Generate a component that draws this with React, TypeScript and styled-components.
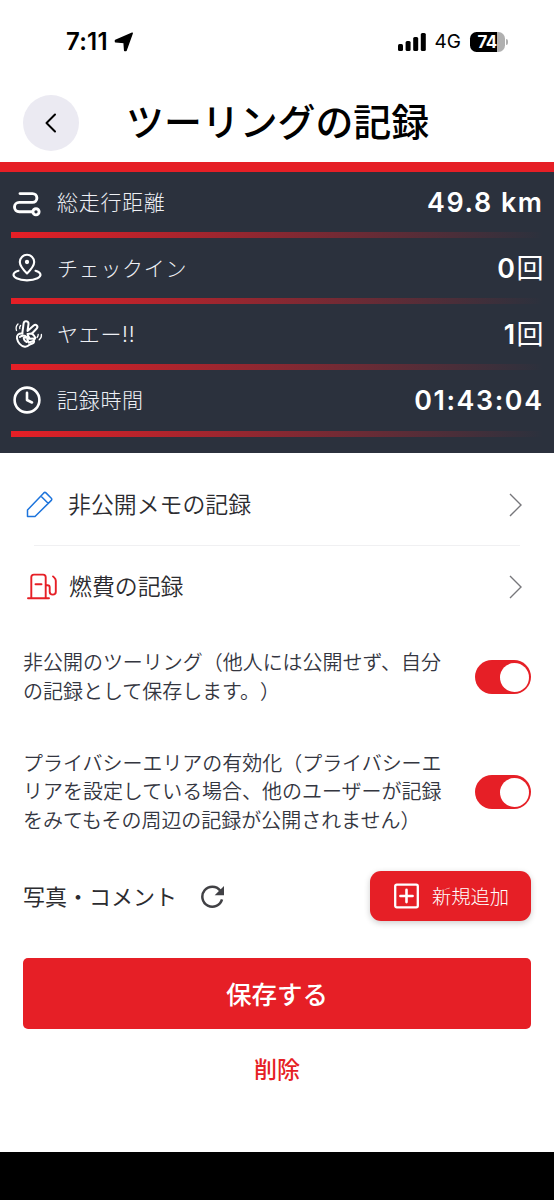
import React from 'react';
import styled, { createGlobalStyle } from 'styled-components';

const GlobalStyle = createGlobalStyle`
  * { box-sizing: border-box; }
  body { margin: 0; background: #fff; }
  button { border: 0; padding: 0; margin: 0; background: none; font: inherit; color: inherit; cursor: pointer; }
  svg { display: block; flex: none; }
`;

const RED = '#e61f26';

const Screen = styled.div`
  width: 554px;
  height: 1200px;
  display: flex;
  flex-direction: column;
  background: #fff;
  font-family: Inter, 'Noto Sans CJK JP', sans-serif;
  color: #2c2c30;
  white-space: nowrap;
  overflow: hidden;
`;

const StatusBar = styled.div`
  height: 83px;
  display: flex;
  align-items: center;
  justify-content: space-between;
  padding: 0 46px 0 66px;
  color: #000;
`;

const StatusGroup = styled.div`
  display: flex;
  align-items: center;
`;

const Clock = styled.span`
  font-size: 24px;
  font-weight: 600;
  letter-spacing: 0.2px;
  margin-right: 6px;
`;

const Network = styled.span`
  font-size: 19px;
  font-weight: 400;
  margin: 0 9px 0 9px;
  letter-spacing: 0;
`;

const Battery = styled.div`
  width: 35px;
  height: 20px;
  border-radius: 6.5px;
  background: linear-gradient(90deg, #000 76%, #b0b0b0 76%);
  color: #fff;
  font-size: 17px;
  font-weight: 700;
  line-height: 20px;
  letter-spacing: -0.8px;
  text-align: center;
  padding-right: 1px;
`;

const BatteryTip = styled.div`
  width: 2px;
  height: 6px;
  margin-left: 1px;
  border-radius: 0 2px 2px 0;
  background: #b0b0b0;
`;

const Header = styled.header`
  height: 79px;
  display: flex;
  align-items: center;
  padding: 0 23px;
  gap: 47px;
`;

const BackButton = styled.button`
  width: 56px;
  height: 56px;
  border-radius: 50%;
  background: #ebeaf2;
  display: flex;
  align-items: center;
  justify-content: center;
`;

const Title = styled.h1`
  margin: 0;
  font-size: 37.9px;
  line-height: 54px;
  padding-bottom: 1px;
  font-weight: 500;
  color: #000;
`;

const Stats = styled.section`
  height: 291px;
  border-top: 10px solid ${RED};
  background: #2b313d;
  padding: 0 11px;
`;

const StatRow = styled.div`
  height: 66.15px;
  display: flex;
  flex-direction: column;
`;

const StatBody = styled.div`
  flex: 1;
  display: flex;
  align-items: center;
`;

const StatLabel = styled.span`
  flex: 1;
  margin-left: 14px;
  padding-top: 2px;
  font-size: 21px;
  line-height: 30px;
  letter-spacing: 0.7px;
  font-weight: 300;
  color: #eef0f5;
`;

const StatValue = styled.span`
  font-size: 26.8px;
  line-height: 30px;
  font-weight: 600;
  color: #fff;
  letter-spacing: 1.6px;
  margin-right: -0.6px;
`;

const Counter = styled.span`
  font-size: 27px;
  font-weight: 400;
  letter-spacing: 0;
`;

const Underline = styled.div`
  height: 6px;
  background: linear-gradient(90deg, ${RED} 0%, rgba(230, 31, 38, 0) 100%);
`;

const LinkRow = styled.button`
  height: ${(p: { $height: number }) => p.$height}px;
  display: flex;
  align-items: center;
  padding: 0 32px 0 23px;
  text-align: left;
`;

const LinkList = styled.nav`
  padding-top: 11px;
  display: flex;
  flex-direction: column;
`;

const LinkLabel = styled.span`
  flex: 1;
  margin-left: 11px;
  font-size: 22.9px;
  line-height: 32px;
  font-weight: 350;
`;

const Separator = styled.div`
  height: 1px;
  margin: 0 34px;
  background: #f0f0f2;
`;

const ToggleRow = styled.div`
  display: flex;
  align-items: center;
  justify-content: space-between;
  height: ${(p: { $height: number }) => p.$height}px;
  padding: 0 23px;
`;

const ToggleText = styled.p`
  margin: 0;
  padding-top: 1px;
  font-size: 19.98px;
  line-height: 28.3px;
  font-weight: 350;
  color: #34363f;
  text-spacing-trim: space-all;
`;

const Switch = styled.button`
  width: 56px;
  height: 34px;
  border-radius: 17px;
  background: ${RED};
  display: flex;
  justify-content: flex-end;
  align-items: center;
  padding: 0 2px;
  flex: none;
`;

const Knob = styled.span`
  width: 29px;
  height: 29px;
  border-radius: 50%;
  background: #fff;
`;

const PhotoRow = styled.div`
  height: 50px;
  margin: 13px 23px 0;
  display: flex;
  align-items: center;
  justify-content: space-between;
`;

const PhotoTitle = styled.h2`
  margin: 0 23px 0 0;
  padding-top: 1px;
  font-size: 22px;
  line-height: 30px;
  font-weight: 400;
`;

const AddButton = styled.button`
  width: 161px;
  height: 50px;
  border-radius: 11px;
  background: ${RED};
  box-shadow: 0 2px 6px rgba(0, 0, 0, 0.2);
  color: #fff;
  display: flex;
  align-items: center;
  padding-left: 24px;
  gap: 13px;
  font-size: 19.3px;
  font-weight: 300;
`;

const SaveButton = styled.button`
  height: 71px;
  margin: 37px 23px 0;
  padding-bottom: 2px;
  border-radius: 5px;
  background: ${RED};
  color: #fff;
  font-size: 25.5px;
  font-weight: 500;
`;

const DeleteButton = styled.button`
  align-self: center;
  margin-top: 25px;
  height: 32px;
  color: ${RED};
  font-size: 23px;
  line-height: 32px;
  font-weight: 500;
`;

const HomeBar = styled.div`
  height: 48px;
  margin-top: auto;
  background: #000;
`;

const LocationIcon = () => (
  <svg width="20" height="20" viewBox="0 0 20 20">
    <path d="M18.200 1.300 1.500 8.500v1.300l8.600.6.600 8h1.300z" fill="#000" stroke="#000" strokeWidth="1.500" strokeLinejoin="round" />
  </svg>
);

const SignalIcon = () => (
  <svg width="28" height="18" viewBox="0 0 28 18" fill="#000">
    <rect x="0" y="11" width="5" height="7" rx="1.5" />
    <rect x="7.600" y="8" width="5" height="10" rx="1.500" />
    <rect x="15.200" y="4" width="5" height="14" rx="1.500" />
    <rect x="22.800" y="0" width="5" height="18" rx="1.500" />
  </svg>
);

const RouteIcon = () => (
  <svg width="32" height="32" viewBox="0 0 32 32" fill="none" stroke="#fff" strokeWidth="2.900" strokeLinecap="round">
    <path d="M9 7.600h12.500a4.400 4.400 0 0 1 0 8.800H8.200a4.700 4.700 0 0 0 0 9.400h13.300" />
    <circle cx="25" cy="25.800" r="3.100" />
  </svg>
);

const PinIcon = () => (
  <svg width="32" height="32" viewBox="0 0 32 32" fill="none" stroke="#fff" strokeWidth="2.100" strokeLinecap="round" strokeLinejoin="round">
    <path d="M16 21.500C12.500 18 8.800 14 8.800 10a7.200 7.200 0 0 1 14.400 0c0 4-3.700 8-7.200 11.500z" />
    <circle cx="16" cy="10" r="1.100" fill="#fff" />
    <path d="M7.500 18.800C1.500 20.500 1 24 5.500 26.300c5.500 2.700 15.500 2.700 21 0 4.500-2.300 4-5.800-2-7.500" />
  </svg>
);

const PeaceHandIcon = () => (
  <svg width="32" height="32" viewBox="0 0 32 32" fill="none" stroke="#fff" strokeWidth="2" strokeLinecap="round" strokeLinejoin="round">
    <path d="M11.300 15.500 12.600 5.500c.5-3.300 5.200-2.700 4.900.5L16.500 13l6.200-5.500c2.300-2 4.900 1 3 3L21 15.500" />
    <path d="M11.300 15.500c-3.700-.4-6 1.700-5.300 5 .8 4 3.800 7.600 7.800 8.200 2.200.3 3.700-1 5-2.200l3-1.200c1.700-.8 1.600-2.500.6-3.200 1.900-.8 2.200-2.700 1-3.900l-2.400-2.700-4.500.5" />
    <path d="M8.800 19c2.200-1.700 5-1.700 7.200.2l-3.300.8c.2 1.800 1 3.200 3 4M16.800 17l1.700 3.300-2.300.9 1.600 3.500M19 20.800l3.500-.3M18.500 24.300l3.300-1.100" strokeWidth="2" />
    <path d="M5.500 12.500C4.700 10.200 5 8 7 6M8.800 10.700c-.4-1.200 0-2.300.8-3.200M26 19.500c.8-.8 1.300-1.800 1.200-3M28.200 21.800c1.700-1.400 2.500-3.200 2.200-5.300" strokeWidth="1.300" />
  </svg>
);

const ClockIcon = () => (
  <svg width="32" height="32" viewBox="0 0 32 32" fill="none" stroke="#fff" strokeWidth="2.600" strokeLinecap="round" strokeLinejoin="round">
    <circle cx="16" cy="16" r="12.400" />
    <path d="M16 8.700V16l5 2.500" />
  </svg>
);

const PencilIcon = () => (
  <svg width="34" height="32" viewBox="0 0 34 32" fill="none" stroke="#1d74dc" strokeWidth="1.500" strokeLinejoin="round">
    <path d="M4.500 27.500V21L20.800 3.900c.7-.7 1.500-.7 2.200 0l5.300 5.300c.7.7.7 1.500 0 2.200L12 27.500H4.500zM17.800 7l7.300 7.300" />
  </svg>
);

const FuelIcon = () => (
  <svg width="35" height="32" viewBox="0 0 35 32" fill="none" stroke={RED} strokeWidth="1.900" strokeLinecap="round" strokeLinejoin="round">
    <path d="M5 27.300h21M8.300 27V6.200c0-1.600 1-2.600 2.600-2.600h9.200c1.600 0 2.600 1 2.600 2.600V27M12.500 13.200h6" />
    <path d="M22.900 14.300h1.600c1.500 0 2.200.8 2.200 2.300v4.200c0 3.800 6.100 3.800 6.100 0v-11c0-1.400-.5-2.300-1.500-3.200l-1.300-1.200" />
  </svg>
);

const ChevronRight = () => (
  <svg width="13" height="24" viewBox="0 0 13 24" fill="none" stroke="#77777b" strokeWidth="1.400">
    <path d="M1 1l11 11L1 23" />
  </svg>
);

const ReloadIcon = () => (
  <svg width="26" height="26" viewBox="0 0 26 26">
    <path d="M22 16.300a10 10 0 1 1-1.800-8.800" fill="none" stroke="#414145" strokeWidth="2.500" />
    <path d="M24 2.900v9.300h-9.300z" fill="#414145" />
  </svg>
);

const AddBoxIcon = () => (
  <svg width="25" height="26" viewBox="0 0 25 26" fill="none" stroke="#fff">
    <rect x="1.200" y="1.700" width="22.600" height="22.600" rx="1.500" strokeWidth="2.300" />
    <path d="M12.500 6.900v12.200M6.400 13h12.200" strokeWidth="2.600" strokeLinecap="round" />
  </svg>
);

const stats = [
  { label: '総走行距離', value: '49.8 km', icon: <RouteIcon /> },
  { label: 'チェックイン', value: '0', unit: '回', icon: <PinIcon /> },
  { label: 'ヤエー!!', value: '1', unit: '回', icon: <PeaceHandIcon /> },
  { label: '記録時間', value: '01:43:04', icon: <ClockIcon /> },
];

export default function App() {
  return (
    <>
      <GlobalStyle />
      <Screen lang="ja">
        <StatusBar>
          <StatusGroup>
            <Clock>7:11</Clock>
            <LocationIcon />
          </StatusGroup>
          <StatusGroup>
            <SignalIcon />
            <Network>4G</Network>
            <Battery>74</Battery>
            <BatteryTip />
          </StatusGroup>
        </StatusBar>
        <Header>
          <BackButton aria-label="戻る">
            <svg width="12" height="20" viewBox="0 0 12 20" fill="none" stroke="#000" strokeWidth="2" strokeLinecap="round" strokeLinejoin="round">
              <path d="M10 1.500 1.500 10l8.500 8.500" />
            </svg>
          </BackButton>
          <Title>ツーリングの記録</Title>
        </Header>
        <Stats>
          {stats.map((s) => (
            <StatRow key={s.label}>
              <StatBody>
                {s.icon}
                <StatLabel>{s.label}</StatLabel>
                <StatValue>
                  {s.value}
                  {s.unit && <Counter>{s.unit}</Counter>}
                </StatValue>
              </StatBody>
              <Underline />
            </StatRow>
          ))}
        </Stats>
        <LinkList>
          <LinkRow $height={81}>
            <PencilIcon />
            <LinkLabel>非公開メモの記録</LinkLabel>
            <ChevronRight />
          </LinkRow>
          <Separator />
          <LinkRow $height={82}>
            <FuelIcon />
            <LinkLabel>燃費の記録</LinkLabel>
            <ChevronRight />
          </LinkRow>
        </LinkList>
        <ToggleRow $height={98}>
          <ToggleText>
            非公開のツーリング（他人には公開せず、自分
            <br />
            の記録として保存します。）
          </ToggleText>
          <Switch role="switch" aria-checked="true">
            <Knob />
          </Switch>
        </ToggleRow>
        <ToggleRow $height={132}>
          <ToggleText>
            プライバシーエリアの有効化（プライバシーエ
            <br />
            リアを設定している場合、他のユーザーが記録
            <br />
            をみてもその周辺の記録が公開されません）
          </ToggleText>
          <Switch role="switch" aria-checked="true">
            <Knob />
          </Switch>
        </ToggleRow>
        <PhotoRow>
          <StatusGroup>
            <PhotoTitle>写真・コメント</PhotoTitle>
            <ReloadIcon />
          </StatusGroup>
          <AddButton>
            <AddBoxIcon />
            新規追加
          </AddButton>
        </PhotoRow>
        <SaveButton>保存する</SaveButton>
        <DeleteButton>削除</DeleteButton>
        <HomeBar />
      </Screen>
    </>
  );
}
